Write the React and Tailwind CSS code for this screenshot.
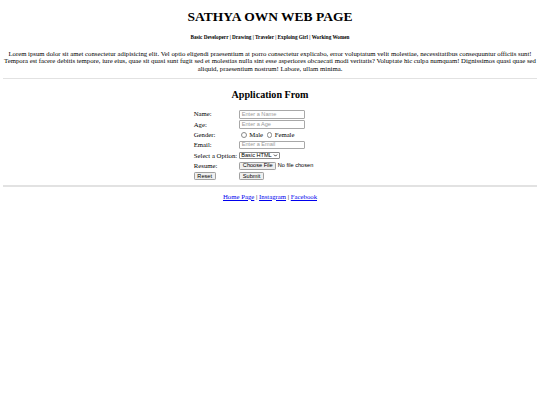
import { ChevronDown } from "lucide-react";

const serif = "font-['Liberation_Serif',_'Times_New_Roman',_serif]";
const sans = "font-['Liberation_Sans',_Arial,_sans-serif]";

function TextBox({ placeholder }) {
  return (
    <div
      className={`${sans} w-[66px] h-[8.6px] border border-[#a8a8a8] rounded-[1px] bg-white pl-[1.5px] flex items-center text-[5.6px] leading-none text-[#9a9a9a]`}
    >
      {placeholder}
    </div>
  );
}

function Radio({ label }) {
  return (
    <span className="inline-flex items-center">
      <span className="ml-[2px] mr-[2.5px] w-[5.5px] h-[5.5px] rounded-full border border-[#8a8a8a] bg-white" />
      {label}
    </span>
  );
}

function Btn({ children }) {
  return (
    <span
      className={`${sans} inline-flex items-center h-[8px] px-[2.6px] border border-[#a0a0a0] rounded-[1.2px] bg-[#efefef] text-[5.6px] leading-none text-black`}
    >
      {children}
    </span>
  );
}

function App() {
  return (
    <div className={`${serif} bg-white text-black w-[540px] h-[405px] px-[3.4px] text-[6.75px] leading-[1.15]`}>
      <h1 className="text-center font-bold text-[13.5px] leading-[1.15] pt-[9px]">SATHYA OWN WEB PAGE</h1>
      <h6 className="text-center font-bold text-[5.2px] leading-[1.15] mt-[10px]">
        Basic Developerr | Drawing | Traveler | Exploing Girl | Working Women
      </h6>
      <p className="text-center mt-[9.2px]">
        Lorem ipsum dolor sit amet consectetur adipisicing elit. Vel optio eligendi praesentium at porro consectetur
        explicabo, error voluptatum velit molestiae, necessitatibus consequuntur officiis sunt! Tempora est facere
        debitis tempore, iure eius, quae sit quasi sunt fugit sed et molestias nulla sint esse asperiores obcaecati modi
        veritatis? Voluptate hic culpa numquam! Dignissimos quasi quae sed aliquid, praesentium nostrum! Labore, ullam
        minima.
      </p>
      <div className="mt-[5px] h-[1.5px] bg-[#e2e2e2]" />

      <h2 className="text-center font-bold text-[10.1px] leading-[1.15] mt-[9.6px]">Application From</h2>

      <div className="mt-[9.4px] mx-auto w-fit grid grid-cols-[auto_auto] auto-rows-[8.6px] gap-y-[1.7px] gap-x-[2px] items-center">
        <span>Name:</span>
        <TextBox placeholder="Enter a Name" />
        <span>Age:</span>
        <TextBox placeholder="Enter a Age" />
        <span>Gender:</span>
        <span className="flex items-center gap-[1.5px]">
          <Radio label="Male" />
          <Radio label="Female" />
        </span>
        <span>Email:</span>
        <TextBox placeholder="Enter a Email" />
        <span>Select a Option:</span>
        <span
          className={`${sans} w-fit h-[7.6px] flex items-center gap-[1px] border border-[#8a8a8a] rounded-[1px] bg-white pl-[1px] pr-[1px] text-[5.6px] leading-none`}
        >
          Basic HTML
          <ChevronDown className="w-[5px] h-[5px]" strokeWidth={3.5} />
        </span>
        <span>Resume:</span>
        <span className={`${sans} flex items-center w-[107px] text-[5.6px] leading-none`}>
          <Btn>Choose File</Btn>
          <span className="ml-[1.5px]">No file chosen</span>
        </span>
        <span>
          <Btn>Reset</Btn>
        </span>
        <span>
          <Btn>Submit</Btn>
        </span>
      </div>

      <div className="mt-[5px] h-[1.5px] bg-[#e2e2e2]" />
      <p className="text-center mt-[6px]">
        <a className="text-[#0000ee] underline">Home Page</a> | <a className="text-[#0000ee] underline">Instagram</a> |{" "}
        <a className="text-[#0000ee] underline">Facebook</a>
      </p>
    </div>
  );
}

export default App;
